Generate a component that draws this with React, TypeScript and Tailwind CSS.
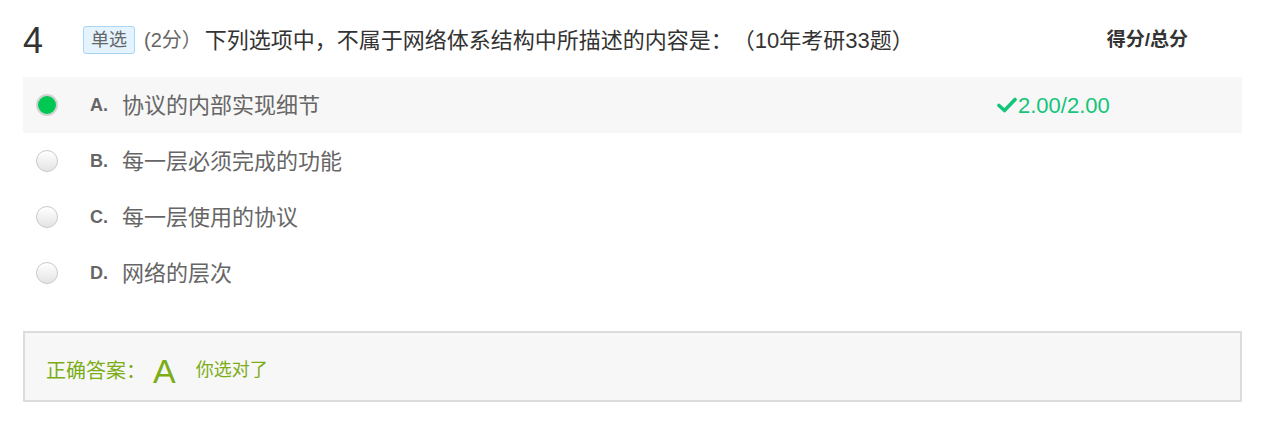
import React from "react";

const options = [
  { key: "A", text: "协议的内部实现细节", selected: true },
  { key: "B", text: "每一层必须完成的功能", selected: false },
  { key: "C", text: "每一层使用的协议", selected: false },
  { key: "D", text: "网络的层次", selected: false },
];

function Check() {
  return (
    <svg width="20" height="16" viewBox="0 0 20 16" className="mr-[1px]">
      <path d="M2 8.5 L7.5 13.5 L18 2.5" fill="none" stroke="#12c57a" strokeWidth="3.6" strokeLinecap="round" strokeLinejoin="round" />
    </svg>
  );
}

function Radio({ selected }: { selected: boolean }) {
  if (selected) {
    return (
      <div className="w-[22px] h-[22px] rounded-full border-[2px] border-[#d2d2d2] bg-[#00c853] shrink-0" />
    );
  }
  return (
    <div className="w-[22px] h-[22px] rounded-full border border-[#c9c9c9] bg-gradient-to-b from-[#ffffff] to-[#e4e4e4] shrink-0" />
  );
}

export default function App() {
  return (
    <div className="w-[1281px] h-[424px] bg-white [text-spacing-trim:space-all] font-['Liberation_Sans','Noto_Sans_CJK_SC',sans-serif]">
      <div className="pl-[23px] pr-[39px] pt-[12px]">
        {/* header */}
        <div className="flex items-center h-[56px]">
          <div className="w-[60px] text-[36px] leading-none text-[#333] pt-[1px]">4</div>
          <div className="h-[28px] px-[7px] flex items-center rounded-[3px] border border-[#a7d6f7] bg-[#e4f3fd] text-[18px] text-[#666]">
            单选
          </div>
          <div className="ml-[9px] text-[20px] text-[#666]">(2分）</div>
          <div className="ml-[3px] text-[22px] text-[#333]">
            下列选项中，不属于网络体系结构中所描述的内容是：（10年考研33题）
          </div>
          <div className="ml-auto mr-[54px] text-[19px] font-bold text-[#333]">得分/总分</div>
        </div>
        {/* options */}
        <div className="mt-[9px] flex flex-col">
          {options.map((o) => (
            <div
              key={o.key}
              className={
                o.selected
                  ? "flex items-center h-[56px] bg-[#f7f7f7] pl-[13px]"
                  : "flex items-center h-[56px] pl-[13px]"
              }
            >
              <Radio selected={o.selected} />
              <div className="ml-[32px] w-[32px] text-[18px] font-bold text-[#666]">{o.key}.</div>
              <div className="text-[22px] text-[#666]">{o.text}</div>
              <div className="flex-1" />
              {o.selected ? (
                <div className="w-[245px] flex items-center text-[22px] text-[#12c57a]">
                  <Check />
                  <span>2.00/2.00</span>
                </div>
              ) : null}
            </div>
          ))}
        </div>
        {/* answer */}
        <div className="mt-[30px] h-[71px] border-2 border-[#dcdcdc] bg-[#f7f7f7] flex items-center pl-[21px] pt-[8px] text-[#7cad17]">
          <span className="text-[20px]">正确答案：</span>
          <span className="ml-[7px] text-[34px] leading-none">A</span>
          <span className="ml-[20px] text-[18px]">你选对了</span>
        </div>
      </div>
    </div>
  );
}
